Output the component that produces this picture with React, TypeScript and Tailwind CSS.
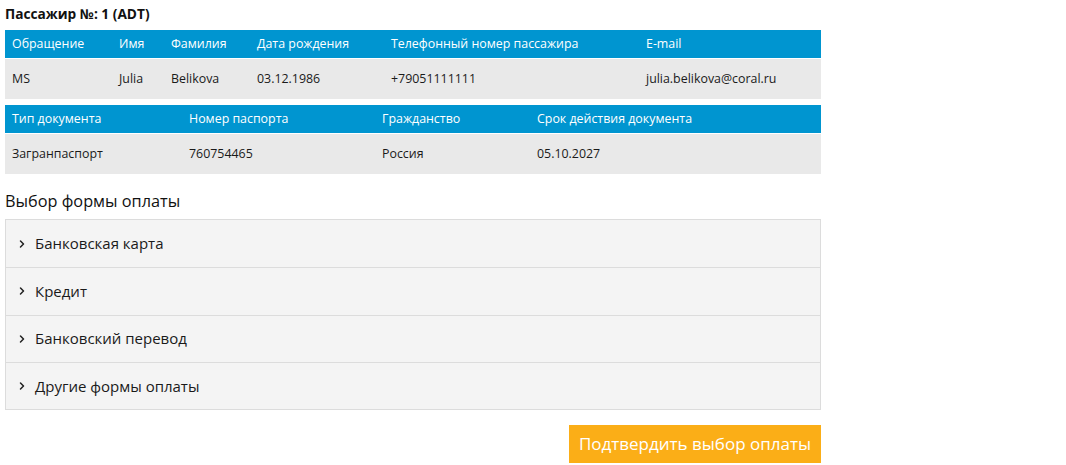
import { ChevronRight } from "lucide-react";

const passenger = [
  { label: "Обращение", value: "MS" },
  { label: "Имя", value: "Julia" },
  { label: "Фамилия", value: "Belikova" },
  { label: "Дата рождения", value: "03.12.1986" },
  { label: "Телефонный номер пассажира", value: "+79051111111" },
  { label: "E-mail", value: "julia.belikova@coral.ru" },
];

const documentInfo = [
  { label: "Тип документа", value: "Загранпаспорт" },
  { label: "Номер паспорта", value: "760754465" },
  { label: "Гражданство", value: "Россия" },
  { label: "Срок действия документа", value: "05.10.2027" },
];

const paymentOptions = ["Банковская карта", "Кредит", "Банковский перевод", "Другие формы оплаты"];

function InfoTable({ items, cols }: { items: { label: string; value: string }[]; cols: string }) {
  return (
    <div className="w-[816px] text-[12.4px]">
      <div className={`grid ${cols} h-[28px] items-center bg-[#0095d0] text-white`}>
        {items.map((it) => (
          <div key={it.label} className="pl-[7px] whitespace-nowrap">
            {it.label}
          </div>
        ))}
      </div>
      <div className={`grid ${cols} h-[40px] mt-px items-center bg-[#e9e9e9] text-[#1a1a1a]`}>
        {items.map((it) => (
          <div key={it.label} className="pl-[7px] whitespace-nowrap">
            {it.value}
          </div>
        ))}
      </div>
    </div>
  );
}

export default function App() {
  return (
    <div className="bg-white w-[1066px] h-[465px] px-[5px] pt-[3px] text-[13px] font-['Open_Sans',sans-serif]">
      <h3 className="font-bold text-[13.7px] h-[21px] leading-[21px] text-[#111] mb-[6px]">Пассажир №: 1 (ADT)</h3>

      <InfoTable items={passenger} cols="grid-cols-[107px_52px_86px_134px_255px_1fr]" />
      <div className="h-[6px]" />
      <InfoTable items={documentInfo} cols="grid-cols-[177px_193px_155px_1fr]" />

      <h2 className="text-[16.3px] text-[#111] mt-[16px] mb-[7px] leading-[22px]">Выбор формы оплаты</h2>

      <div className="w-[816px] border border-[#dcdcdc] bg-[#f4f4f4]">
        {paymentOptions.map((opt, i) => (
          <div
            key={opt}
            className={`flex items-center h-[47.25px] pl-[10px] gap-[7px] text-[15px] text-[#1a1a1a] ${
              i > 0 ? "border-t border-[#dcdcdc]" : ""
            }`}
          >
            <ChevronRight size={12} strokeWidth={3} className="text-[#222]" />
            {opt}
          </div>
        ))}
      </div>

      <div className="w-[816px] flex justify-end mt-[15px]">
        <button className="bg-[#fbae17] text-white text-[17px] h-[38px] px-[10px]">Подтвердить выбор оплаты</button>
      </div>
    </div>
  );
}
